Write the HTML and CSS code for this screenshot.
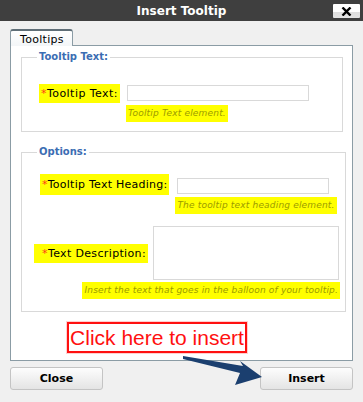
FILE: index.html
```html
<!DOCTYPE html>
<html lang="en">
<head>
  <meta charset="UTF-8">
  <title>Insert Tooltip</title>
  <link rel="stylesheet" href="styles.css">
</head>
<body>

  <div class="titlebar">
    <span></span>
    <h1>Insert Tooltip</h1>
    <button class="x-btn" title="Close">
      <svg width="11" height="9" viewBox="0 0 11 9"><path d="M1.5 0.5 L9.5 8.5 M9.5 0.5 L1.5 8.5" stroke="#000" stroke-width="2.4"/></svg>
    </button>
  </div>

  <div class="dialog">
    <div class="tabs"><span class="tab">Tooltips</span></div>

    <div class="panel">
      <fieldset class="fs1">
        <legend>Tooltip Text:</legend>
        <div class="row row1">
          <label class="lbl"><b>*</b>Tooltip Text:</label>
          <div class="field">
            <input type="text" class="in1">
            <span class="hint">Tooltip Text element.</span>
          </div>
        </div>
      </fieldset>

      <fieldset class="fs2">
        <legend>Options:</legend>
        <div class="row row2">
          <label class="lbl"><b>*</b>Tooltip Text Heading:</label>
          <div class="field">
            <input type="text" class="in2">
            <span class="hint">The tooltip text heading element.</span>
          </div>
        </div>
        <div class="row3">
          <div class="row3-top">
            <label class="lbl"><b>*</b>Text Description:</label>
            <textarea></textarea>
          </div>
          <span class="hint">Insert the text that goes in the balloon of your tooltip.</span>
        </div>
      </fieldset>

      <!-- annotation over the dialog -->
      <div class="callout">Click here to insert</div>
    </div>

    <div class="actions">
      <button class="btn">Close</button>
      <button class="btn">Insert</button>
    </div>

    <svg class="arrow" width="363" height="402" viewBox="0 0 363 402">
      <polygon points="183,356 243,366 240,361 262,377 235,385 240,373 183,359" fill="#1b3f6f"/>
    </svg>
  </div>

</body>
</html>
```

FILE: styles.css
```css
body {
  margin: 0;
  background: #f0f0f0;
  font-family: "DejaVu Sans", Verdana, sans-serif;
  font-size: 11px;
  color: #000;
}

.titlebar {
  height: 21px;
  background: #3f3f3f;
  display: grid;
  grid-template-columns: 1fr auto 1fr;
  align-items: center;
}

.titlebar h1 {
  margin: 0;
  color: #fff;
  font-size: 12px;
  font-weight: bold;
}

.x-btn {
  justify-self: end;
  margin-right: 3px;
  margin-top: 1px;
  width: 27px;
  height: 14px;
  padding: 0;
  border: none;
  border-radius: 1px;
  background: linear-gradient(#ffffff 0%, #ffffff 55%, #dedede 56%, #e4e4e4 100%);
  display: flex;
  align-items: center;
  justify-content: center;
}

.dialog {
  position: relative;
  padding: 8px 10px 0;
}

.tabs {
  display: flex;
  height: 17px;
}

.tab {
  position: relative;
  z-index: 1;
  width: 63px;
  height: 17px;
  box-sizing: border-box;
  padding: 2px 0 0 9px;
  border: 1px solid #8b9ca5;
  border-top: 2px solid #5f6e77;
  border-bottom: none;
  border-radius: 3px 3px 0 0;
  background: linear-gradient(#ffffff, #f3f6f8);
  line-height: 13px;
  font-size: 11px;
  letter-spacing: 0.3px;
}

.panel {
  position: relative;
  height: 316px;
  box-sizing: border-box;
  margin-top: -1px;
  padding: 5px 10px 0;
  background: #fff;
  border: 1px solid #8b9ca5;
}

fieldset {
  margin: 0;
  padding: 0;
  border: 1px solid #d9d9d9;
  box-sizing: border-box;
}

legend {
  margin-left: 15px;
  padding: 0 2px;
  color: #3b6db3;
  font-weight: bold;
  font-size: 10px;
  line-height: 12px;
}

.fs1 {
  width: 322px;
  height: 81px;
}

.fs2 {
  width: 325px;
  height: 166px;
  margin-top: 14px;
}

.lbl {
  background: #ffff00;
  line-height: 13px;
  letter-spacing: 0.45px;
  white-space: nowrap;
}

.lbl b {
  color: #ff3a1a;
  font-weight: normal;
}

.row {
  display: flex;
  align-items: flex-start;
}

.row1 {
  margin: 21px 0 0 17px;
}

.row2 {
  margin: 16px 0 0 18px;
}

.row1 .lbl {
  padding: 3px 2px;
}

.row2 .lbl {
  padding: 4px 2px;
  letter-spacing: 0.25px;
}

.field {
  display: flex;
  flex-direction: column;
  align-items: flex-start;
}

.row1 .field {
  margin-left: 7px;
  margin-top: 1px;
}

.row2 .field {
  margin-left: 8px;
  margin-top: 4px;
}

input, textarea {
  margin: 0;
  padding: 0;
  border: 1px solid #d9d9d9;
  box-sizing: border-box;
  background: #fff;
}

.in1 {
  width: 182px;
  height: 16px;
}

.in2 {
  width: 152px;
  height: 16px;
}

.hint {
  background: #ffff00;
  color: #9b9b00;
  font-style: italic;
  font-size: 9px;
  letter-spacing: 0.18px;
  line-height: 12px;
  padding: 2px 2px 3px;
  white-space: nowrap;
}

.row1 .hint {
  margin: 4px 0 0 -1px;
}

.row2 .hint {
  margin: 3px 0 0 -2px;
}

.row3 {
  display: flex;
  flex-direction: column;
  align-items: flex-end;
  margin: 12px 6px 0 0;
}

.row3-top {
  display: flex;
  align-items: center;
}

.row3 .lbl {
  padding: 3px 2px 3px 8px;
  letter-spacing: 0.35px;
}

.row3 textarea {
  width: 186px;
  height: 54px;
  margin-left: 5px;
  resize: none;
}

.row3 .hint {
  margin-top: 2px;
  margin-right: -1px;
}

.callout {
  position: absolute;
  left: 56px;
  top: 276px;
  width: 180px;
  height: 31px;
  box-sizing: border-box;
  border: 2px solid #ff1010;
  box-shadow: 0 0 0 1px #ffd0d0;
  color: #ff1010;
  font-family: "Liberation Sans", Arial, sans-serif;
  font-size: 21px;
  line-height: 27px;
  text-align: center;
  background: #fff;
}

.actions {
  display: flex;
  justify-content: space-between;
  margin-top: 6px;
}

.btn {
  width: 93px;
  height: 23px;
  padding: 0;
  border: 1px solid #c4c4c4;
  border-radius: 3px;
  background: linear-gradient(#fdfdfd, #e4e4e4);
  font-family: "DejaVu Sans", Verdana, sans-serif;
  font-size: 11px;
  font-weight: bold;
  color: #000;
}

.arrow {
  position: absolute;
  left: 0;
  top: -21px;
  pointer-events: none;
}
```
